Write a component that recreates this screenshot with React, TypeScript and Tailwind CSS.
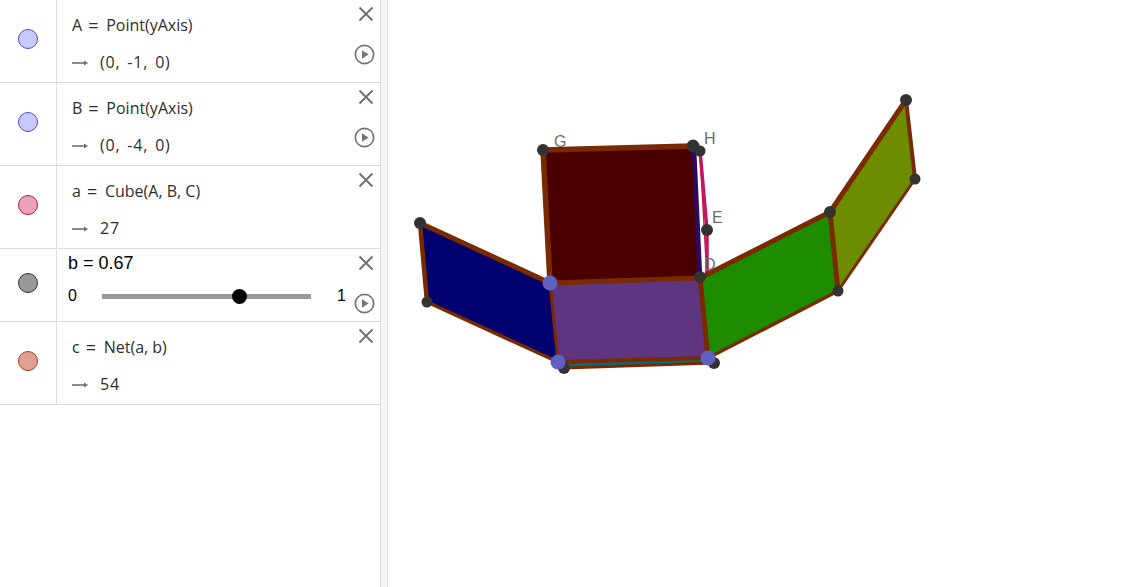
const mathFont = "[font-family:'Open_Sans',sans-serif]";

function CloseIcon() {
  return (
    <svg width="16" height="16" viewBox="0 0 16 16" className="text-[#6e6e6e]" fill="none" stroke="currentColor" strokeWidth="1.8">
      <path d="M1.5 1.5L14.5 14.5M14.5 1.5L1.5 14.5" />
    </svg>
  );
}

function PlayIcon() {
  return (
    <svg width="21" height="21" viewBox="0 0 21 21" className="text-[#757575]">
      <circle cx="10.5" cy="10.5" r="9.2" fill="none" stroke="currentColor" strokeWidth="1.7" />
      <path d="M8 6.3L14.6 10.5L8 14.7Z" fill="currentColor" />
    </svg>
  );
}

function Arrow() {
  return (
    <svg width="16" height="8" viewBox="0 0 16 8" className="text-[#6e6e6e]">
      <path d="M0 4H13" stroke="currentColor" strokeWidth="1.6" />
      <path d="M12 1.6L16 4L12 6.4Z" fill="currentColor" />
    </svg>
  );
}

function Controls({ play }: { play: boolean }) {
  return (
    <div className="flex w-[28px] shrink-0 flex-col items-center pt-[6px]">
      <CloseIcon />
      {play && (
        <div className="mt-[22px] -ml-[4px]">
          <PlayIcon />
        </div>
      )}
    </div>
  );
}

const rows = [
  { def: 'A', rhs: 'Point(yAxis)', value: '(0, -1, 0)', marble: 'bg-[#c9c9ff] border-[#4f4fc8]', play: true },
  { def: 'B', rhs: 'Point(yAxis)', value: '(0, -4, 0)', marble: 'bg-[#c9c9ff] border-[#4f4fc8]', play: true },
  { def: 'a', rhs: 'Cube(A, B, C)', value: '27', marble: 'bg-[#e9a3b4] border-[#b5174f]', play: false },
];

function DefinitionRow({ def, rhs, value, marble, play }: { def: string; rhs: string; value: string; marble: string; play: boolean }) {
  return (
    <div className="flex h-[83px] border-b border-[#dcdcdc]">
      <div className="flex w-[57px] shrink-0 justify-center border-r border-[#dcdcdc] pt-[29px] pr-[1px]">
        <div className={`h-[20px] w-[20px] rounded-full border ${marble}`} />
      </div>
      <div className={`flex-1 pl-[15px] pt-[15px] text-[16px] leading-[21px] text-[#2e2e2e] ${mathFont}`}>
        <div className="flex items-center gap-[6px]">
          <span>{def}</span>
          <span className="w-[12px] text-[18px] leading-[21px]">=</span>
          <span>{rhs}</span>
        </div>
        <div className="mt-[16px] flex items-center">
          <Arrow />
          <span className="ml-[12px] tracking-[0.8px] [word-spacing:2px]">{value}</span>
        </div>
      </div>
      <Controls play={play} />
    </div>
  );
}

function SliderRow() {
  return (
    <div className="flex h-[73px] border-b border-[#dcdcdc]">
      <div className="flex w-[57px] shrink-0 justify-center border-r border-[#dcdcdc] pt-[24px] pr-[1px]">
        <div className="h-[20px] w-[20px] rounded-full border border-[#333333] bg-[#999999]" />
      </div>
      <div className="flex-1 pl-[11px] pt-[4px] font-['Liberation_Sans',sans-serif] text-black">
        <div className="text-[18px] leading-[21px]">b = 0.67</div>
        <div className="mt-[12px] flex items-center text-[16px] leading-[20px]">
          <span className="w-[34px]">0</span>
          <div className="relative h-[5px] w-[209px] bg-[#999999]">
            <div className="absolute left-[130px] top-[-5px] h-[15px] w-[15px] rounded-full bg-black" />
          </div>
          <span className="ml-[26px]">1</span>
        </div>
      </div>
      <Controls play />
    </div>
  );
}

const faces = [
  { points: '420,223 550,283 558,362 427,302', fill: '#00006e' },
  { points: '543,150 693,146 700,278 550,283', fill: '#4a0000' },
  { points: '550,283 700,278 708,358 558,362', fill: '#5f3480' },
  { points: '700,278 830,212 838,291 708,358', fill: '#1e8c00' },
  { points: '830,212 906,100 915,179 838,291', fill: '#6e8c00' },
  { points: '558,362 708,358 714,363 564,368', fill: '#006e80' },
];

// x1, y1, x2, y2, width: the edges get thinner towards the bottom of the net
const edges = [
  [420, 223, 550, 283, 5],
  [420, 223, 427, 302, 4.5],
  [427, 302, 558, 362, 3.5],
  [550, 283, 558, 362, 3],
  [543, 150, 693, 146, 5.5],
  [543, 150, 550, 283, 5.5],
  [550, 283, 700, 278, 5],
  [558, 362, 708, 358, 4],
  [564, 368, 714, 363, 3],
  [700, 278, 708, 358, 5],
  [700, 278, 830, 212, 5],
  [708, 358, 838, 291, 3.5],
  [830, 212, 838, 291, 5],
  [830, 212, 906, 100, 5],
  [838, 291, 915, 179, 3],
  [906, 100, 915, 179, 4],
];

const darkPoints = [
  [420, 223, 6], [427, 302, 5.5], [543, 150, 6], [693, 146, 6.5], [700, 151, 5.5], [707, 230, 6], [700, 277, 6],
  [830, 212, 6], [838, 291, 5.5], [906, 100, 6], [915, 179, 5.5], [564, 368, 6], [714, 363, 6],
];

const bluePoints = [
  [550, 283, 7.5], [558, 362, 7.5], [708, 358, 7.5],
];

const labels = [
  { text: 'G', x: 554, y: 147 },
  { text: 'H', x: 704, y: 144 },
  { text: 'E', x: 712, y: 223 },
  { text: 'D', x: 704, y: 270 },
];

function NetDrawing() {
  return (
    <svg viewBox="388 0 741 587" className="h-full w-full">
      <path d="M700 151L707 230L707 278" fill="none" stroke="#c2185b" strokeWidth="3.5" />
      <path d="M700 151L707 278" fill="none" stroke="#c2185b" strokeWidth="1.5" />
      {faces.map((face) => (
        <polygon key={face.points} points={face.points} fill={face.fill} />
      ))}
      {edges.map(([x1, y1, x2, y2, w]) => (
        <line key={`${x1}-${y1}-${x2}-${y2}`} x1={x1} y1={y1} x2={x2} y2={y2} stroke="#7a2a00" strokeWidth={w} strokeLinecap="round" />
      ))}
      <path d="M694 148L700 276" stroke="#2b0a66" strokeWidth="4.5" />
      {darkPoints.map(([x, y, r]) => (
        <circle key={`${x}-${y}`} cx={x} cy={y} r={r} fill="#333333" />
      ))}
      {bluePoints.map(([x, y, r]) => (
        <circle key={`${x}-${y}`} cx={x} cy={y} r={r} fill="#5f5fc4" />
      ))}
      {labels.map((label) => (
        <text key={label.text} x={label.x} y={label.y} fontFamily="'Liberation Sans', sans-serif" fontSize="16" fill="#6e6e6e">
          {label.text}
        </text>
      ))}
    </svg>
  );
}

export default function App() {
  return (
    <div className="flex h-[587px] w-[1129px] overflow-hidden bg-white">
      <div className="w-[381px] shrink-0 border-r border-[#dcdcdc]">
        {rows.map((row) => (
          <DefinitionRow key={row.def} {...row} />
        ))}
        <SliderRow />
        <DefinitionRow def="c" rhs="Net(a, b)" value="54" marble="bg-[#dda093] border-[#a8400f]" play={false} />
      </div>
      <div className="w-[7px] shrink-0 border-r border-[#e6e6e6] bg-[#f5f5f5]" />
      <div className="min-w-0 flex-1">
        <NetDrawing />
      </div>
    </div>
  );
}
